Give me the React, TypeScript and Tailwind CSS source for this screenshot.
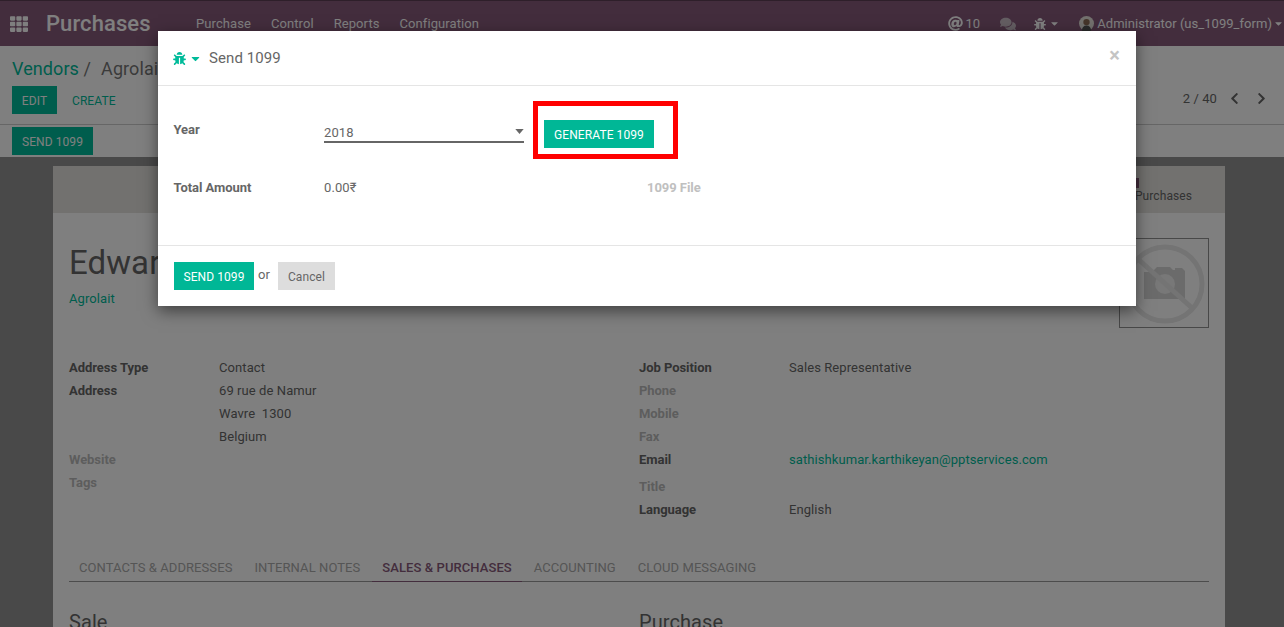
import { FaBug, FaCaretDown, FaComments, FaTh, FaChevronLeft, FaChevronRight, FaAt } from "react-icons/fa";

function Field({ label, value, muted, green, extra = "" }: { label: string; value?: string; muted?: boolean; green?: boolean; extra?: string }) {
  return (
    <div className={`flex items-center h-[23px] ${extra}`}>
      <div className={`w-[150px] font-bold tracking-[-0.05px] ${muted ? "text-[#bbbbbb]" : "text-[#666666]"}`}>{label}</div>
      <div className={green ? "text-[#00bb9a]" : "text-[#666666]"}>{value}</div>
    </div>
  );
}

function Tab({ label, active }: { label: string; active?: boolean }) {
  return (
    <div className={`h-[29px] px-[10px] pt-[1px] mr-[2px] flex items-center uppercase border-b ${active ? "text-[#875a7b] font-medium border-[#875a7b]" : "text-[#aaaaaa] border-transparent"}`}>
      {label}
    </div>
  );
}

function Placeholder() {
  return (
    <div className="w-[90px] h-[90px] border border-[#909090] flex items-center justify-center">
      <svg viewBox="0 0 88 88" className="w-[88px] h-[88px]">
        <circle cx="45" cy="45" r="37" fill="none" stroke="#e8e8e8" strokeWidth="5" />
        <path d="M24 33h8l5-5h13l3 3h2v-2h7l2 2 1 1v28H24z" fill="#d6d6d6" />
        <circle cx="45" cy="45" r="10" fill="#f0f0f0" />
        <path d="M18 20L72 69" stroke="#e8e8e8" strokeWidth="5" />
      </svg>
    </div>
  );
}

export default function App() {
  return (
    <div className="relative w-[1284px] h-[627px] overflow-hidden bg-[#929292] text-[13px] leading-[18px] tracking-[0.08px] text-[#666666] font-['Roboto',sans-serif]">
      {/* Navbar */}
      <div className="h-[46px] bg-[#875a7b] flex items-center text-white pl-[10px] border-t border-[#5d3f55]">
        <FaTh className="w-[18px] h-[18px] text-white" />
        <div className="ml-[18px] text-[22px] font-medium text-white w-[150px]">Purchases</div>
        <div className="flex gap-[20px] text-white">
          <span>Purchase</span>
          <span>Control</span>
          <span>Reports</span>
          <span>Configuration</span>
        </div>
        <div className="ml-auto flex items-center text-white">
          <FaAt className="w-[15px] h-[15px]" />
          <span className="ml-[2px]">10</span>
          <FaComments className="ml-[20px] w-[16px] h-[16px] text-[#c8bcc5]" />
          <FaBug className="ml-[18px] w-[12px] h-[12px]" />
          <FaCaretDown className="ml-[3px] w-[11px] h-[11px]" />
          <svg viewBox="0 0 16 16" className="ml-[19px] w-[15px] h-[15px]">
            <circle cx="8" cy="8" r="8" fill="#e6e3dc" />
            <circle cx="8" cy="6.5" r="3.4" fill="#8a6a55" />
            <path d="M3 16c0-4 2-6 5-6s5 2 5 6z" fill="#555555" />
          </svg>
          <span className="ml-[3px] tracking-[0.04px]">Administrator (us_1099_form)</span>
          <FaCaretDown className="ml-[1px] w-[11px] h-[11px]" />
        </div>
      </div>

      {/* Control panel */}
      <div className="h-[111px] bg-white">
        <div className="h-[79px] border-b border-[#cccccc] pl-[12px] pr-[16px]">
          <div className="pt-[12px] h-[40px] text-[18px] leading-[21px]">
            <span className="text-[#00bb9a]">Vendors</span>
            <span className="text-[#777777]"> /&nbsp;&nbsp;<span className="ml-[1px]">Agrolait</span></span>
          </div>
          <div className="flex items-center justify-between">
            <div className="flex items-center text-[12px]">
              <div className="h-[28px] w-[45px] pt-[1px] bg-[#00bb9a] text-white flex items-center justify-center">EDIT</div>
              <div className="ml-[15px] h-[28px] pt-[1px] text-[#00bb9a] flex items-center">CREATE</div>
            </div>
            <div className="flex items-center mt-[-3px] text-[#666666]">
              <span>2 / 40</span>
              <FaChevronLeft className="ml-[11px] w-[13px] h-[13px]" />
              <FaChevronRight className="ml-[14px] w-[13px] h-[13px]" />
            </div>
          </div>
        </div>
        <div className="pl-[12px] pt-[2px]">
          <div className="h-[28px] w-[81px] pt-[1px] bg-[#00bb9a] text-white flex items-center justify-center text-[12px]">SEND 1099</div>
        </div>
      </div>

      {/* Sheet */}
      <div className="ml-[53px] mt-[9px] w-[1172px] h-[500px] bg-white">
        <div className="h-[47px] bg-[#e5e3df] flex justify-end pr-[33px] pt-[12px] text-[12px] leading-[16px]">
          <div className="flex flex-col items-start">
            <div className="w-[4px] h-[10px] bg-[#875a7b]" />
            <span className="text-[#666666]">Purchases</span>
          </div>
        </div>
        <div className="px-[16px] pt-[27px] relative">
          <div className="absolute right-[16px] top-[25px]">
            <Placeholder />
          </div>
          <div className="text-[33px] leading-[46px] text-[#666666]">Edward Foster</div>
          <div className="mt-[4px] h-[22px] text-[#00bb9a]">Agrolait</div>

          <div className="mt-[44px] grid grid-cols-2">
            <div>
              <Field label="Address Type" value="Contact" />
              <Field label="Address" value="69 rue de Namur" />
              <Field label="" value={"Wavre\u00a0\u00a01300"} />
              <Field label="" value="Belgium" />
              <Field label="Website" muted />
              <Field label="Tags" muted />
            </div>
            <div>
              <Field label="Job Position" value="Sales Representative" />
              <Field label="Phone" muted />
              <Field label="Mobile" muted />
              <Field label="Fax" muted />
              <Field label="Email" value="sathishkumar.karthikeyan@pptservices.com" green />
              <Field label="Title" muted extra="mt-[4px]" />
              <Field label="Language" value="English" />
            </div>
          </div>

          <div className="mt-[32px] flex border-b border-[#999999] h-[29px]">
            <Tab label="Contacts & Addresses" />
            <Tab label="Internal Notes" />
            <Tab label="Sales & Purchases" active />
            <Tab label="Accounting" />
            <Tab label="Cloud Messaging" />
          </div>

          <div className="mt-[26px] grid grid-cols-2 text-[20px] leading-[28px] text-[#666666]">
            <div>Sale</div>
            <div>Purchase</div>
          </div>
        </div>
      </div>

      {/* Backdrop */}
      <div className="absolute inset-0 bg-black/50" />

      {/* Modal */}
      <div className="absolute left-[158px] top-[31px] w-[978px] h-[275px] bg-white shadow-[0_5px_15px_rgba(0,0,0,0.5)] flex flex-col">
        <div className="h-[55px] shrink-0 border-b border-[#e5e5e5] flex items-center pl-[15px] pr-[16px]">
          <FaBug className="w-[13px] h-[13px] text-[#00bb9a]" />
          <FaCaretDown className="ml-[3px] w-[13px] h-[13px] text-[#00bb9a]" />
          <span className="ml-[7px] text-[15px] text-[#666666]">Send 1099</span>
          <span className="ml-auto mt-[-6px] text-[20px] font-bold leading-none text-[#c4c4c4]">×</span>
        </div>
        <div className="h-[159px] shrink-0 pl-[15.5px] pt-[35px] text-[#666666]">
          <div className="flex items-start h-[58px]">
            <div className="w-[150.5px] font-bold tracking-[-0.05px]">Year</div>
            <div className="w-[200px] h-[20px] mt-[2px] border-b-2 border-[#666666] flex items-center justify-between">
              <span className="pt-[2px]">2018</span>
              <svg viewBox="0 0 10 6" className="w-[9px] h-[5px] mt-[-1px]"><path d="M0 0h10L5 6z" fill="#666666" /></svg>
            </div>
            <div className="ml-[20px] mt-[-1px] w-[110px] h-[28px] pt-[1px] bg-[#00b796] text-white flex items-center justify-center text-[12px]">GENERATE 1099</div>
          </div>
          <div className="flex items-center">
            <div className="w-[150.5px] font-bold tracking-[-0.05px]">Total Amount</div>
            <div className="w-[323px]">0.00₹</div>
            <div className="font-bold tracking-[-0.05px] text-[#c0c0c0]">1099 File</div>
          </div>
        </div>
        <div className="flex-1 border-t border-[#e5e5e5] flex items-center pl-[16px]">
          <div className="w-[80px] h-[28px] pt-[1px] bg-[#00b796] text-white flex items-center justify-center text-[12px]">SEND 1099</div>
          <span className="ml-[4px] mt-[-3px] text-[#666666]">or</span>
          <div className="ml-[8px] w-[57px] h-[28px] pt-[1px] bg-[#dddddd] text-[#666666] flex items-center justify-center text-[12px]">Cancel</div>
        </div>
      </div>

      {/* Red annotation rectangle */}
      <div className="absolute left-[533px] top-[101px] w-[145px] h-[58px] border-[5px] border-[#ff0000]" />
    </div>
  );
}
